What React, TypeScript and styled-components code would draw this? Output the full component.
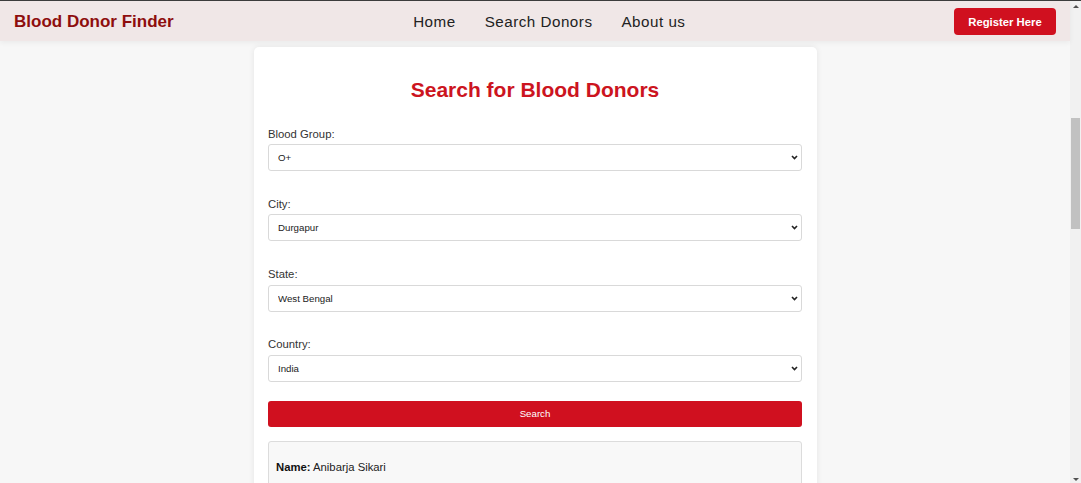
import React from "react";
import styled, { createGlobalStyle } from "styled-components";

const GlobalStyle = createGlobalStyle`
  html, body { margin: 0; padding: 0; height: 100%; overflow: hidden; }
  body { background: #f7f7f7; font-family: "Liberation Sans", Arial, sans-serif; }
  #root { height: 100%; }
`;

const Shell = styled.div`
  display: flex;
  height: 100vh;
  border-top: 1px solid #3c3c3c;
  box-sizing: border-box;
  overflow: hidden;
`;

const Page = styled.div`
  flex: 1;
  display: flex;
  flex-direction: column;
  min-width: 0;
`;

const Header = styled.header`
  height: 40px;
  flex: none;
  display: flex;
  align-items: center;
  justify-content: space-between;
  padding: 0 14px;
  background: #f0e7e7;
  box-shadow: 0 2px 5px rgba(0, 0, 0, 0.05);
  position: relative;
  z-index: 1;
`;

const Brand = styled.div`
  font-size: 17px;
  font-weight: 700;
  color: #8e0e0e;
  line-height: 20px;
  margin-top: 1px;
`;

const Nav = styled.nav`
  display: flex;
  padding-right: 29px;
  margin-top: 1px;
`;

const NavLink = styled.a`
  font-size: 15.2px;
  letter-spacing: 0.5px;
  color: #222;
  text-decoration: none;
  padding: 0 14.5px;
`;

const RegisterButton = styled.button`
  height: 27px;
  width: 102px;
  margin-top: 1px;
  border: none;
  border-radius: 4px;
  background: #d0101f;
  color: #fff;
  font-family: "Liberation Sans", Arial, sans-serif;
  font-weight: 700;
  font-size: 11.3px;
  padding: 0;
`;

const Main = styled.main`
  flex: 1;
  display: flex;
  justify-content: center;
  padding-top: 6px;
  overflow: hidden;
`;

const Card = styled.section`
  width: 563px;
  box-sizing: border-box;
  background: #fff;
  border-radius: 5px;
  box-shadow: 0 0 6px rgba(0, 0, 0, 0.08);
  padding: 31px 14.5px 0;
  align-self: flex-start;
`;

const Title = styled.h2`
  margin: 0 0 25.5px;
  text-align: center;
  font-size: 21px;
  line-height: 24px;
  font-weight: 700;
  color: #cc1420;
`;

const Field = styled.div`
  display: flex;
  flex-direction: column;
  margin-bottom: 26.8px;
`;

const Label = styled.label`
  font-size: 11.3px;
  line-height: 13px;
  color: #333;
  margin-bottom: 3.5px;
`;

const SelectWrap = styled.div`
  position: relative;
`;

const Select = styled.select`
  display: block;
  height: 27px;
  width: 100%;
  box-sizing: border-box;
  border: 1px solid #d9d9d9;
  border-radius: 3px;
  background: #fff;
  font-family: "Liberation Sans", Arial, sans-serif;
  font-size: 9.7px;
  color: #222;
  padding: 0 9px;
  appearance: none;
  -webkit-appearance: none;
`;

const Chevron = styled.svg`
  position: absolute;
  right: 4px;
  top: 11px;
  width: 7px;
  height: 5px;
  pointer-events: none;
`;

const SearchButton = styled.button`
  display: block;
  width: 100%;
  height: 25.5px;
  margin-top: -7.5px;
  border: none;
  border-radius: 3px;
  background: #d0101f;
  color: #fff;
  font-family: "Liberation Sans", Arial, sans-serif;
  font-size: 9.7px;
`;

const Result = styled.div`
  margin-top: 14px;
  background: #f8f8f8;
  border: 1px solid #dcdcdc;
  border-radius: 3px;
  padding: 19px 7px 40px;
`;

const ResultLine = styled.p`
  margin: 0;
  font-size: 11.3px;
  line-height: 13px;
  color: #222;

  b {
    color: #111;
  }
`;

const ScrollTrack = styled.div`
  width: 11px;
  flex: none;
  background: #f1f1f1;
  display: flex;
  flex-direction: column;
  align-items: center;
`;

const Arrow = styled.div<{ $down?: boolean }>`
  width: 0;
  height: 0;
  margin-top: ${(p) => (p.$down ? "auto" : "4px")};
  margin-bottom: ${(p) => (p.$down ? "2px" : "0")};
  border-left: 3px solid transparent;
  border-right: 3px solid transparent;
  ${(p) =>
    p.$down
      ? "border-top: 3px solid #505050;"
      : "border-bottom: 3px solid #505050;"}
`;

const Thumb = styled.div`
  width: 9px;
  height: 111px;
  margin-top: 110px;
  background: #c1c1c1;
`;

const fields = [
  { label: "Blood Group:", value: "O+" },
  { label: "City:", value: "Durgapur" },
  { label: "State:", value: "West Bengal" },
  { label: "Country:", value: "India" },
];

export default function App() {
  return (
    <>
      <GlobalStyle />
      <Shell>
        <Page>
          <Header>
            <Brand>Blood Donor Finder</Brand>
            <Nav>
              <NavLink href="#">Home</NavLink>
              <NavLink href="#">Search Donors</NavLink>
              <NavLink href="#">About us</NavLink>
            </Nav>
            <RegisterButton>Register Here</RegisterButton>
          </Header>
          <Main>
            <Card>
              <Title>Search for Blood Donors</Title>
              {fields.map((f) => (
                <Field key={f.label}>
                  <Label>{f.label}</Label>
                  <SelectWrap>
                    <Select defaultValue={f.value}>
                      <option>{f.value}</option>
                    </Select>
                    <Chevron viewBox="0 0 7 5">
                      <path d="M1 1 L3.5 3.6 L6 1" fill="none" stroke="#222" strokeWidth="1.6" />
                    </Chevron>
                  </SelectWrap>
                </Field>
              ))}
              <SearchButton>Search</SearchButton>
              <Result>
                <ResultLine>
                  <b>Name:</b> Anibarja Sikari
                </ResultLine>
              </Result>
            </Card>
          </Main>
        </Page>
        <ScrollTrack>
          <Arrow />
          <Thumb />
          <Arrow $down />
        </ScrollTrack>
      </Shell>
    </>
  );
}
